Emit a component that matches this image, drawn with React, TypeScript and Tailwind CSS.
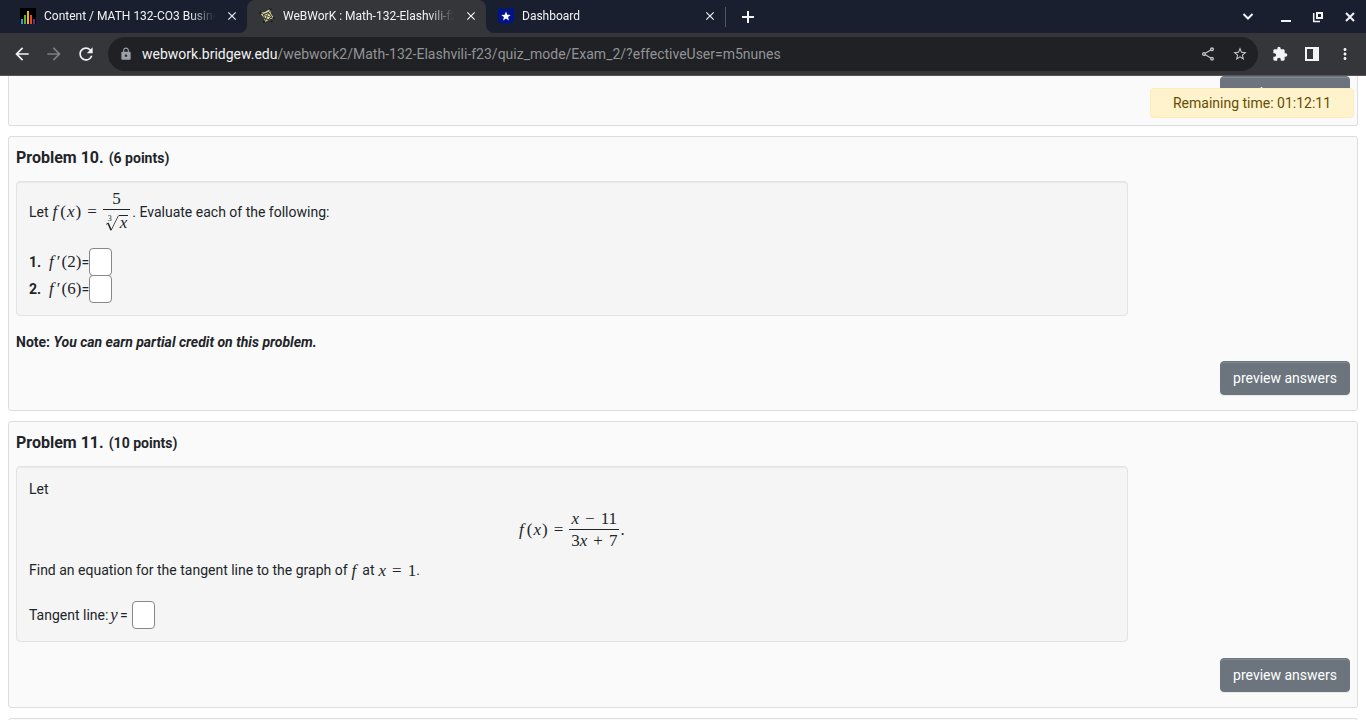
import React from 'react';
import {
  MdArrowBack,
  MdArrowForward,
  MdRefresh,
  MdLock,
  MdOutlineShare,
  MdStarOutline,
  MdExtension,
  MdMoreVert,
  MdAdd,
  MdClose,
} from 'react-icons/md';

const mathFont = "font-['Liberation_Serif',serif] text-[17px] leading-5 whitespace-nowrap";

const ChartFavicon = () => (
  <svg className="w-4 h-4 shrink-0" viewBox="0 0 16 16">
    <rect width="16" height="16" fill="#000" />
    <rect x="1" y="11" width="2" height="5" fill="#1ba1f2" />
    <rect x="4" y="7" width="2" height="9" fill="#5fae2e" />
    <rect x="7" y="3" width="2" height="13" fill="#f5b800" />
    <rect x="10" y="7" width="2" height="9" fill="#e8452c" />
    <rect x="13" y="11" width="2" height="5" fill="#6b2a8c" />
  </svg>
);

const WebFavicon = () => (
  <svg className="w-4 h-4 shrink-0" viewBox="0 0 16 16">
    <path d="M1 5l5-1 5-3 1 5 3 4-4 1-5 3-1-4z" fill="#e3dfaa" />
    <path d="M4.500 6.500l5-2 3 4-3 3-4-1z" fill="none" stroke="#22221a" strokeWidth="1" />
    <path d="M8 8l3-6M8 8l6 2M8 8l-2 5M8 8L2 5" stroke="#22221a" strokeWidth="0.7" />
    <path d="M10.500 0.500l1.500 1.500M0.500 4.500l2 1M14 9.500l1.500 1M4.500 14.500l1-1.500M12 13l1.500 1" stroke="#111" strokeWidth="1.500" />
  </svg>
);

const StarFavicon = () => (
  <svg className="w-4 h-4 shrink-0" viewBox="0 0 16 16">
    <path d="M0 0l8 1 8-1v14l-8 2-8-2z" fill="#001489" />
    <path d="M8 3.500l1.300 3.200 3.400.2-2.600 2.200.8 3.300L8 10.600l-2.900 1.800.8-3.300-2.600-2.200 3.400-.2z" fill="#fff" />
  </svg>
);

interface TabProps {
  icon: React.ReactNode;
  title: string;
}

const Tab: React.FC<TabProps> = ({ icon, title }) => (
  <div className="flex h-full w-[239px] items-center pb-px pl-3 pr-2">
    {icon}
    <span className="ml-2 flex-1 overflow-hidden whitespace-nowrap text-xs leading-4 text-[#f1f3f4] [mask-image:linear-gradient(to_right,black_85%,transparent)]">
      {title}
    </span>
    <button aria-label={`Close ${title}`} className="ml-2.5 text-[#f1f3f4]">
      <MdClose className="h-3.5 w-3.5" />
    </button>
  </div>
);

const BrowserBar = () => (
  <header className="shrink-0 border-b border-[#5a5356] bg-[#35363a]">
    <div className="flex h-[33px]">
      <div className="rounded-br-lg bg-[#1a1f30] pl-2">
        <Tab icon={<ChartFavicon />} title="Content / MATH 132-CO3 Business" />
      </div>
      <div className="bg-[linear-gradient(#1a1f30_50%,#35363a_50%)]">
        <div className="h-full rounded-t-lg bg-[#35363a]">
          <Tab icon={<WebFavicon />} title="WeBWorK : Math-132-Elashvili-f23" />
        </div>
      </div>
      <div className="flex flex-1 items-center rounded-bl-lg bg-[#1a1f30] text-[#f1f3f4]">
        <Tab icon={<StarFavicon />} title="Dashboard" />
        <div className="h-5 w-px bg-[#50566a]" />
        <button aria-label="New tab" className="ml-3">
          <svg className="h-5 w-5" viewBox="0 0 20 20" stroke="currentColor" strokeWidth="2">
            <path d="M10 4v12M4 10h12" />
          </svg>
        </button>
        <div className="ml-auto flex items-center gap-5 pr-2.5">
          <button aria-label="Search tabs" className="mr-0.5">
            <svg className="h-3 w-3" viewBox="0 0 12 12" fill="none" stroke="currentColor" strokeWidth="2">
              <path d="M1.500 3L6 7.500 10.500 3" />
            </svg>
          </button>
          <button aria-label="Minimize" className="ml-1">
            <svg className="h-3 w-3" viewBox="0 0 12 12" fill="currentColor">
              <path d="M1 9h10v2H1z" />
            </svg>
          </button>
          <button aria-label="Restore">
            <svg className="h-3 w-3" viewBox="0 0 12 12" fill="none" stroke="currentColor">
              <path d="M5 2h5v5H5z" strokeWidth="2" />
              <path d="M1.700 2v8.500H8" strokeWidth="1.500" />
            </svg>
          </button>
          <button aria-label="Close window">
            <svg className="h-3 w-3" viewBox="0 0 12 12" stroke="currentColor" strokeWidth="2">
              <path d="M2 2l8 8M10 2l-8 8" />
            </svg>
          </button>
        </div>
      </div>
    </div>

    <div className="flex h-[42px] items-center px-3 pb-px text-[#f1f3f4]">
      <button aria-label="Back">
        <MdArrowBack className="h-5 w-5" />
      </button>
      <button aria-label="Forward" className="ml-3 text-[#7d7e81]">
        <MdArrowForward className="h-5 w-5" />
      </button>
      <button aria-label="Reload" className="ml-3">
        <MdRefresh className="h-5 w-5" />
      </button>
      <div className="ml-3 flex h-[34px] flex-1 items-center rounded-full bg-[#202124] pl-[11px] pr-2.5">
        <MdLock className="h-3.5 w-3.5 text-[#9aa0a6]" />
        <span className="ml-[9px] flex-1 whitespace-nowrap text-sm text-[#929497]">
          <span className="text-[#f1f3f4]">webwork.bridgew.edu</span>
          /webwork2/Math-132-Elashvili-f23/quiz_mode/Exam_2/?effectiveUser=m5nunes
        </span>
        <button aria-label="Share" className="text-[#c4c6c9]">
          <MdOutlineShare className="h-4 w-4" />
        </button>
        <button aria-label="Bookmark" className="ml-4 text-[#c4c6c9]">
          <MdStarOutline className="h-4 w-4" />
        </button>
      </div>
      <div className="ml-3.5 flex items-center gap-4">
        <button aria-label="Extensions">
          <MdExtension className="h-4 w-4" />
        </button>
        <button aria-label="Side panel">
          <svg className="h-4 w-4" viewBox="0 0 16 16" fill="currentColor">
            <path d="M1 1h14v14H1zM3 3v10h6V3z" fillRule="evenodd" />
          </svg>
        </button>
        <button aria-label="Menu">
          <MdMoreVert className="h-[18px] w-[18px]" />
        </button>
      </div>
    </div>
  </header>
);

const PreviewButton = () => (
  <button className="h-[34px] rounded border border-[#6c757d] bg-[#6c757d] px-3 text-sm text-white shadow-[inset_0_1px_0_rgba(255,255,255,0.15),0_1px_1px_rgba(0,0,0,0.075)]">
    preview answers
  </button>
);

const AnswerBox: React.FC<{ label: string }> = ({ label }) => (
  <input
    type="text"
    aria-label={label}
    className="h-7 w-[23px] shrink-0 rounded border border-[#888] bg-white px-1 text-sm"
  />
);

// binary operator or relation, spaced on both sides
const Op: React.FC<{ children: React.ReactNode }> = ({ children }) => (
  <span className="mx-1.5 inline-block">{children}</span>
);

const FofX = () => (
  <span>
    <i>f</i>
    <span className="ml-[3px]">(</span>
    <i className="mx-px">x</i>)<Op>=</Op>
  </span>
);

const Fraction: React.FC<{ top: React.ReactNode; bottom: React.ReactNode }> = ({ top, bottom }) => (
  <span className="inline-flex flex-col items-center">
    <span className="px-0.5">{top}</span>
    <span className="w-full border-t border-[#212529] px-0.5 pt-px text-center">{bottom}</span>
  </span>
);

const CubeRoot: React.FC<{ children: React.ReactNode }> = ({ children }) => (
  <span className="relative mt-1 inline-flex items-end">
    <span className="absolute left-[3px] top-0 text-[8px] leading-[8px]">3</span>
    <svg className="h-4 w-3.5" viewBox="0 0 14 16" fill="none" stroke="#212529">
      <path d="M1 9.500L3.200 8" strokeWidth="0.8" />
      <path d="M3 8l3 7" strokeWidth="1.600" />
      <path d="M6 15.500L13.500 0.500" strokeWidth="0.8" />
    </svg>
    <span className="h-4 border-t border-[#212529] px-px leading-[14px]">{children}</span>
  </span>
);

interface ProblemProps {
  number: number;
  points: number;
  note?: React.ReactNode;
  children: React.ReactNode;
}

const Problem: React.FC<ProblemProps> = ({ number, points, note, children }) => (
  <section className="rounded-[3px] border border-[#ddd] bg-[#fafafa] px-[7px] pb-[15px] pt-[7px]">
    <h2 className="flex h-7 items-center gap-[5px] text-base font-bold">
      Problem {number}. <span className="text-sm">({points} points)</span>
    </h2>
    <div className="mt-[9px] w-10/12 rounded border border-[#e3e3e3] bg-[#f5f5f5] p-3 shadow-[inset_0_1px_1px_rgba(0,0,0,0.05)]">
      {children}
    </div>
    {note}
    <div className={note ? 'mt-2 flex justify-end' : 'mt-4 flex justify-end'}>
      <PreviewButton />
    </div>
  </section>
);

const derivatives = [2, 6];

export default function App() {
  return (
    <div className="flex h-screen flex-col overflow-hidden bg-white font-['Roboto',sans-serif] text-sm leading-[21px] text-[#212529]">
      <BrowserBar />
      <main className="relative flex-1 overflow-hidden px-2">
        <div className="absolute right-3 top-3 flex h-[30px] w-[204px] items-center justify-center rounded border border-[#ffecb5] bg-[#fff3cd] text-[#664d03]">
          Remaining time: 01:12:11
        </div>

        <div className="flex flex-col gap-2.5">
          <section className="flex justify-end rounded-b-[3px] border border-t-0 border-[#ddd] bg-[#fafafa] px-[7px] pb-[15px]">
            <PreviewButton />
          </section>

          <Problem
            number={10}
            points={6}
            note={
              <p className="mt-4 font-bold">
                Note: <em>You can earn partial credit on this problem.</em>
              </p>
            }
          >
            <div className="flex h-9 items-center">
              Let
              <span className={`${mathFont} ml-1 flex items-center`}>
                <FofX />
                <Fraction top="5" bottom={<CubeRoot><i>x</i></CubeRoot>} />
              </span>
              <span className="ml-0.5">. Evaluate each of the following:</span>
            </div>
            <ol className="mt-[18px] -space-y-px">
              {derivatives.map((value, index) => (
                <li key={value} className="flex items-center">
                  <b>{index + 1}.</b>
                  <span className={`${mathFont} ml-2`}>
                    <i>f</i>
                    <span className="ml-[3px]">′</span>
                    <span className="ml-px">({value})</span>
                  </span>
                  =
                  <AnswerBox label={`f prime of ${value}`} />
                </li>
              ))}
            </ol>
          </Problem>

          <Problem number={11} points={10}>
            <p>Let</p>
            <div className={`${mathFont} flex h-[60px] items-center justify-center`}>
              <FofX />
              <Fraction
                top={<><i>x</i><Op>−</Op>11</>}
                bottom={<>3<i>x</i><Op>+</Op>7</>}
              />
              <span className="ml-px">.</span>
            </div>
            <p className="flex h-[21px] items-center">
              Find an equation for the tangent line to the graph of
              <i className={`${mathFont} ml-1 mr-1.5`}>f</i>
              at
              <span className={`${mathFont} ml-1`}><i>x</i><Op>=</Op>1</span>.
            </p>
            <div className="mt-5 flex items-center">
              Tangent line:
              <i className={`${mathFont} mx-0.5`}>y</i>
              <span className="mr-1">=</span>
              <AnswerBox label="Tangent line" />
            </div>
          </Problem>

          <section className="h-10 rounded-[3px] border border-[#ddd] bg-[#fafafa]" />
        </div>
      </main>
    </div>
  );
}
